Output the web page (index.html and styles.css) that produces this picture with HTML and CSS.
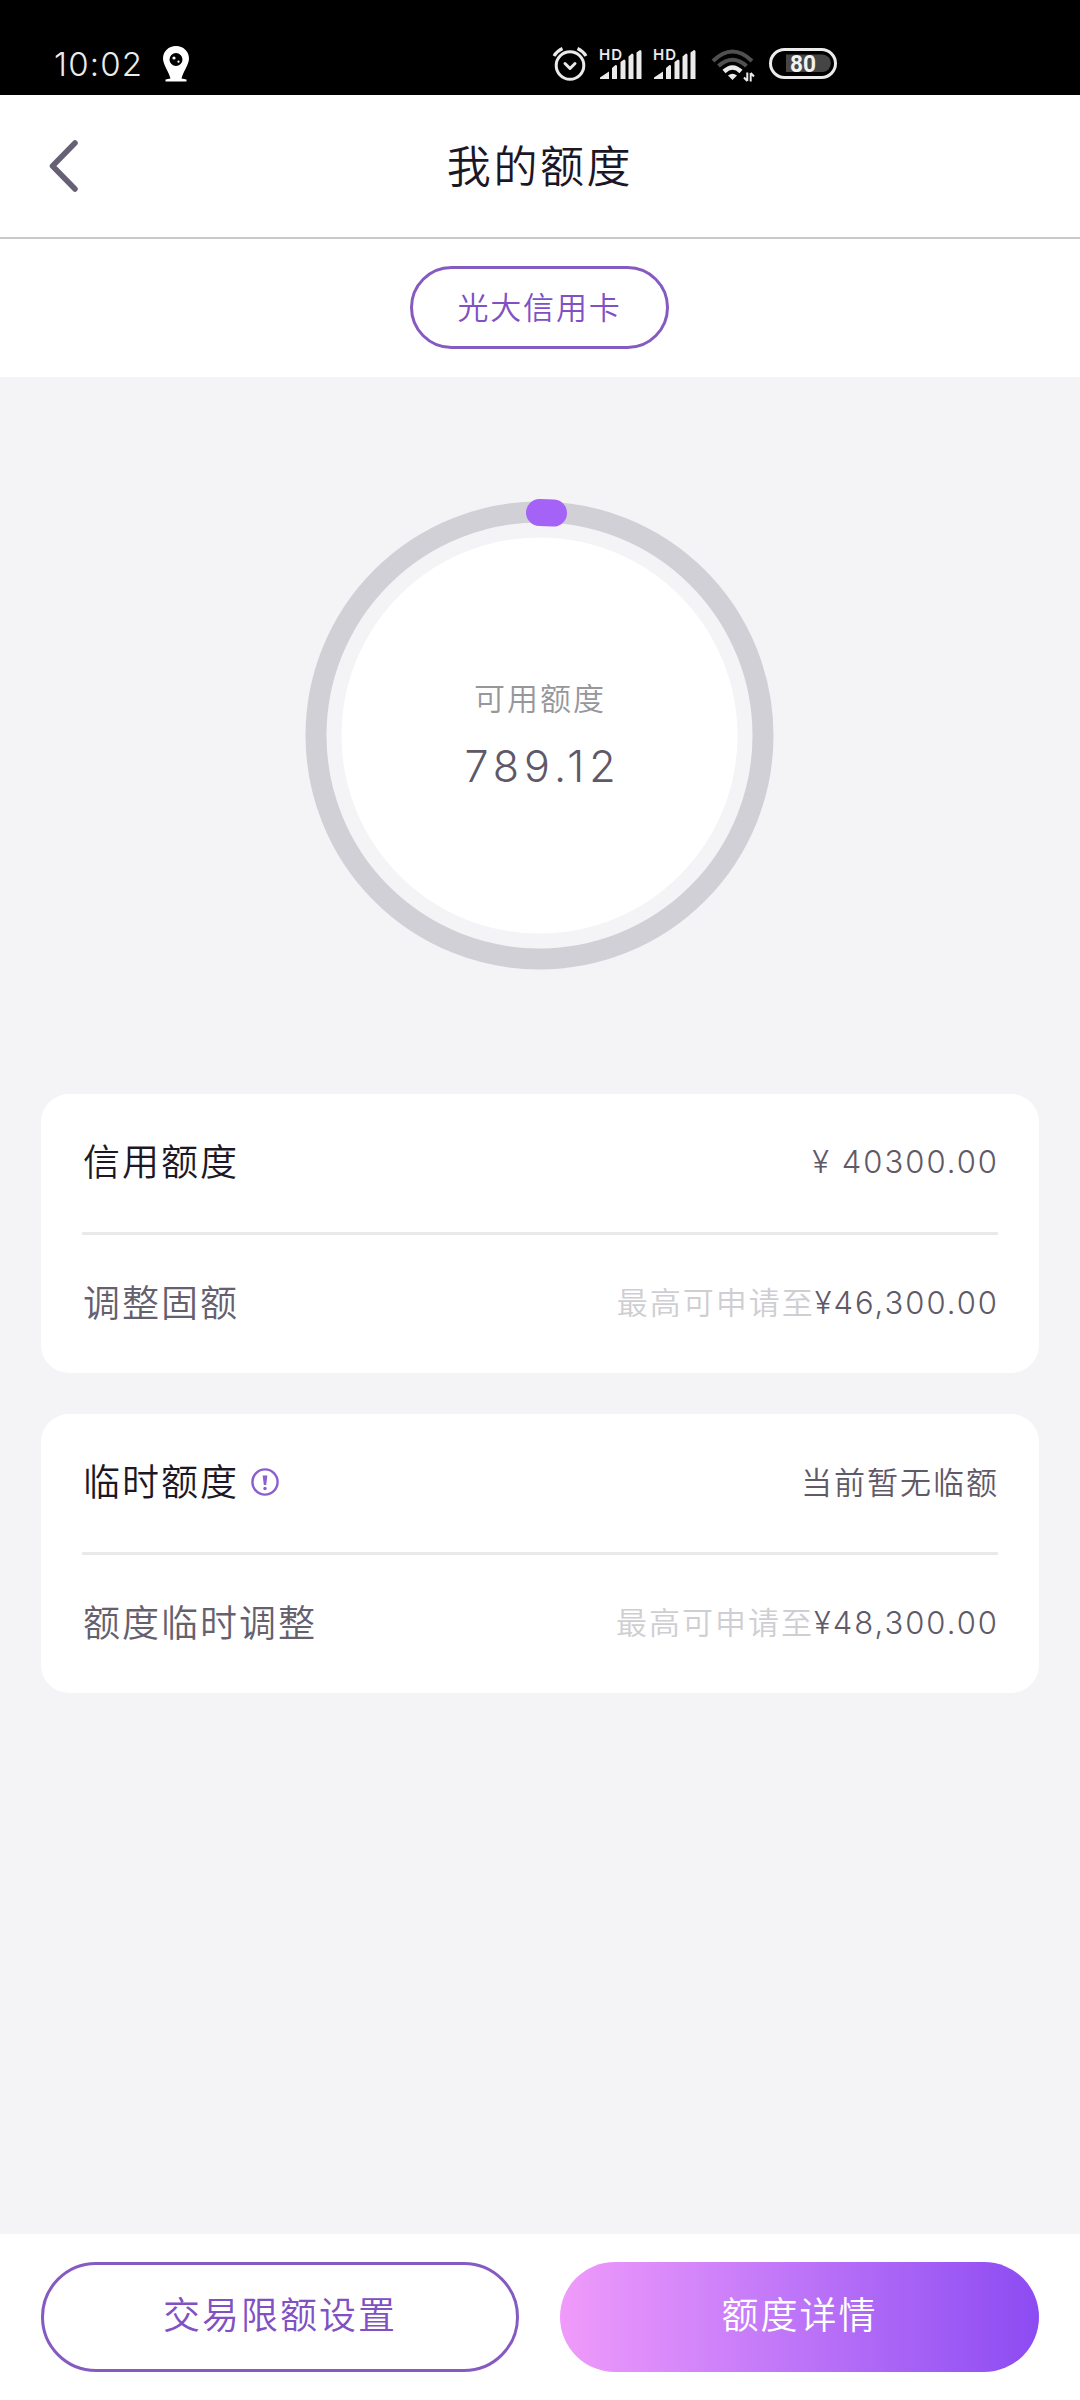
FILE: index.html
```html
<!DOCTYPE html>
<html lang="zh-CN">
<head>
<meta charset="utf-8">
<title>我的额度</title>
<link rel="stylesheet" href="styles.css">
</head>
<body>
<div class="screen">
  <div class="status">
    <span class="time">10:02</span>
    <svg class="pin" width="28" height="38" viewBox="0 0 28 38">
      <path fill="#fff" fill-rule="evenodd" d="M14 1C6.500 1 1 6.500 1 13.500C1 19.500 6.500 26 8.500 33.500L3.500 34.500V36.500H24.500V34.500L19.500 33.500C21.500 26 27 19.500 27 13.500C27 6.500 21.500 1 14 1ZM14 8A6.500 6.500 0 1 1 14 21A6.500 6.500 0 0 1 14 8Z"/>
      <circle cx="12" cy="13" r="1.600" fill="#fff"/><circle cx="16.500" cy="16.700" r="1.100" fill="#fff"/>
    </svg>
    <div class="indicators">
      <svg width="38" height="38" viewBox="0 0 38 38" fill="none" stroke="#ebebeb" stroke-width="3">
        <circle cx="19" cy="20.500" r="13.800"/>
        <path d="M14 18.500l5 5 5-5" stroke-linecap="round" stroke-linejoin="round"/>
        <path d="M3 11Q6 6 11.500 3.500M35 11Q32 6 26.500 3.500" stroke-width="3.200"/>
      </svg>
      <svg class="signal" width="42" height="32" viewBox="0 0 42 32" fill="#ebebeb">
        <text class="hd" x="-1" y="12" textLength="23">HD</text>
        <path d="M0 31V29.500L9 23.500V31ZM12 31V20L15.500 17Q17 17 17 18V31ZM20.500 31V14L24 11.500Q25.500 11.500 25.500 13V31ZM28.500 31V8.500L32 5.500Q33.500 5.500 33.500 7V31ZM36.500 31V4.500L40 2Q41.500 2 41.500 3.500V31Z"/>
      </svg>
      <svg class="signal" width="42" height="32" viewBox="0 0 42 32" fill="#ebebeb">
        <text class="hd" x="-1" y="12" textLength="23">HD</text>
        <path d="M0 31V29.500L9 23.500V31ZM12 31V20L15.500 17Q17 17 17 18V31ZM20.500 31V14L24 11.500Q25.500 11.500 25.500 13V31ZM28.500 31V8.500L32 5.500Q33.500 5.500 33.500 7V31ZM36.500 31V4.500L40 2Q41.500 2 41.500 3.500V31Z"/>
      </svg>
      <svg class="wifi" width="44" height="36" viewBox="0 0 44 36" fill="none">
        <path d="M2 14Q21.500-5 41 14" stroke="#505050" stroke-width="4"/>
        <path d="M7.500 19Q21.500 6.500 35.500 19" stroke="#505050" stroke-width="4"/>
        <path d="M13 24.500Q21.500 16.500 30 24.500" stroke="#ebebeb" stroke-width="4.500"/>
        <path d="M17 28.500Q21.500 25 26 28.500L21.500 33Z" fill="#ebebeb"/>
        <path d="M36.300 25.500V34M36.300 34L33 30.500M39.700 34.500V26M39.700 26L43 29.500" stroke="#ebebeb" stroke-width="2"/>
      </svg>
      <svg width="70" height="34" viewBox="0 0 70 34">
        <rect x="2.500" y="3.500" width="65" height="28" rx="14" fill="none" stroke="#ebebeb" stroke-width="3"/>
        <path d="M18 8.500H55A8.800 8.800 0 0 1 55 26H18Z" fill="#454545"/>
        <text class="charge" x="22" y="26" textLength="26" lengthAdjust="spacingAndGlyphs">80</text>
      </svg>
    </div>
  </div>

  <header class="header">
    <svg class="back" width="34" height="54" viewBox="0 0 34 54" fill="none" stroke="#675f73" stroke-width="5.500" stroke-linecap="round" stroke-linejoin="round"><path d="M28 4L5.500 27L28 50"/></svg>
    <h1 class="title">我的额度</h1>
  </header>

  <div class="tabs"><span class="tab">光大信用卡</span></div>

  <main class="content">
    <div class="gauge">
      <svg class="ring" width="480" height="480" viewBox="0 0 480 480" fill="none">
        <circle cx="239.500" cy="240.500" r="223.500" stroke="#d2d0d7" stroke-width="21"/>
        <circle cx="239.500" cy="240.500" r="198" fill="#fff"/>
        <path d="M239.500 17.500A223 223 0 0 1 253.500 18" stroke="#a562f6" stroke-width="27" stroke-linecap="round"/>
      </svg>
      <div class="gauge-text">
        <span class="gauge-label">可用额度</span>
        <span class="gauge-value">789.12</span>
      </div>
    </div>

    <section class="card">
      <div class="row">
        <span class="name strong">信用额度</span>
        <span class="value num spaced">¥ 40300.00</span>
      </div>
      <div class="row">
        <span class="name">调整固额</span>
        <span class="value"><span class="hint">最高可申请至</span><span class="num">¥46,300.00</span></span>
      </div>
    </section>

    <section class="card">
      <div class="row">
        <span class="name strong">临时额度</span>
        <svg class="info" width="30" height="30" viewBox="0 0 30 30"><circle cx="15" cy="15" r="12.600" fill="none" stroke="#8c5fd0" stroke-width="2.400"/><path d="M12.600 8.500H17.400L16.200 18H13.800Z" fill="#8c5fd0"/><circle cx="15" cy="21.500" r="1.700" fill="#8c5fd0"/></svg>
        <span class="value">当前暂无临额</span>
      </div>
      <div class="row">
        <span class="name">额度临时调整</span>
        <span class="value"><span class="hint">最高可申请至</span><span class="num">¥48,300.00</span></span>
      </div>
    </section>
  </main>

  <footer class="actions">
    <button class="btn outline">交易限额设置</button>
    <button class="btn filled">额度详情</button>
  </footer>
</div>
</body>
</html>
```
FILE: styles.css
```css
* { box-sizing: border-box; }
body { margin: 0; font-family: "Noto Sans CJK SC", sans-serif; font-weight: 350; }
.screen { width: 1080px; height: 2400px; display: flex; flex-direction: column; background: #f4f4f7; }

.status { height: 95px; background: #000; display: flex; align-items: flex-start; padding: 45px 0 0 54px; }
.time { width: 90px; font: 300 33px/38px Inter, sans-serif; letter-spacing: 1.200px; white-space: nowrap; color: #ebebeb; }
.pin { margin: 0 0 0 18px; }
.indicators { display: flex; margin-left: 361px; }
.signal { margin: 3px 0 0 11px; overflow: visible; }
.signal + .signal { margin-left: 12px; }
.indicators > svg:first-child { margin-top: 0; }
.hd { font: 600 15px Inter, sans-serif; }
.wifi { margin: 2px 0 0 15px; }
.indicators > svg:last-child { margin: 1px 0 0 13px; }
.charge { font: 700 24px Roboto, sans-serif; fill: #f2f2f2; }

.header { height: 144px; background: #fff; border-bottom: 2px solid #c9c8cc; display: grid; grid-template-columns: 140px 1fr 140px; align-items: center; }
.back { margin-left: 47px; }
.title { margin: 0; padding-bottom: 5px; text-align: center; font-size: 44px; line-height: 60px; letter-spacing: 2.600px; font-weight: 350; color: #1c1726; }

.tabs { height: 138px; background: #fff; display: flex; justify-content: center; padding: 27px 1px 0 0; }
.tab { width: 259px; height: 83px; border: 3px solid #855bc2; border-radius: 42px; color: #8050c4; font-size: 31px; line-height: 73px; letter-spacing: 1.800px; text-align: center; }

.content { flex: 1; padding: 118px 41px 0; }
.gauge { display: grid; width: 480px; height: 480px; margin: 0 auto 119px; }
.ring, .gauge-text { grid-area: 1 / 1; }
.gauge-text { display: flex; flex-direction: column; align-items: center; padding-top: 178px; z-index: 1; }
.gauge-label { font-size: 31px; line-height: 48px; letter-spacing: 2px; color: #97969b; }
.gauge-value { font: 300 43px/56px Inter, sans-serif; letter-spacing: 5px; margin: 17px -5px 0 0; color: #5e5868; }

.card { height: 279px; margin-bottom: 41px; padding: 0 41px; background: #fff; border-radius: 28px; }
.row { height: 138px; display: flex; align-items: center; padding-bottom: 2px; }
.row + .row { height: 141px; border-top: 3px solid #e9e9eb; }
.name { padding-bottom: 5px; margin-left: 1px; font-size: 37px; line-height: 56px; letter-spacing: 2px; color: #655f6e; }
.strong { color: #1c1826; }
.info { margin-left: 11px; }
.value { margin: 0 -1px 0 auto; padding-bottom: 3px; font-size: 31px; line-height: 50px; letter-spacing: 2px; color: #5f5968; white-space: nowrap; }
.hint { color: #cfced2; }
.num { font-family: Inter, sans-serif; font-weight: 300; font-size: 31px; letter-spacing: 2px; }
.spaced { padding-bottom: 0; }

.actions { height: 166px; background: #fff; display: flex; justify-content: space-between; padding: 28px 41px; }
.btn { height: 110px; padding: 0 0 8px; border-radius: 55px; font: inherit; font-size: 37px; letter-spacing: 2px; }
.outline { width: 478px; border: 3px solid #855bc2; background: #fff; color: #8050c4; }
.filled { width: 479px; border: 0; background: linear-gradient(90deg, #f09bfb, #bd74f8 50%, #8c4bf2); color: #fff; }
```
